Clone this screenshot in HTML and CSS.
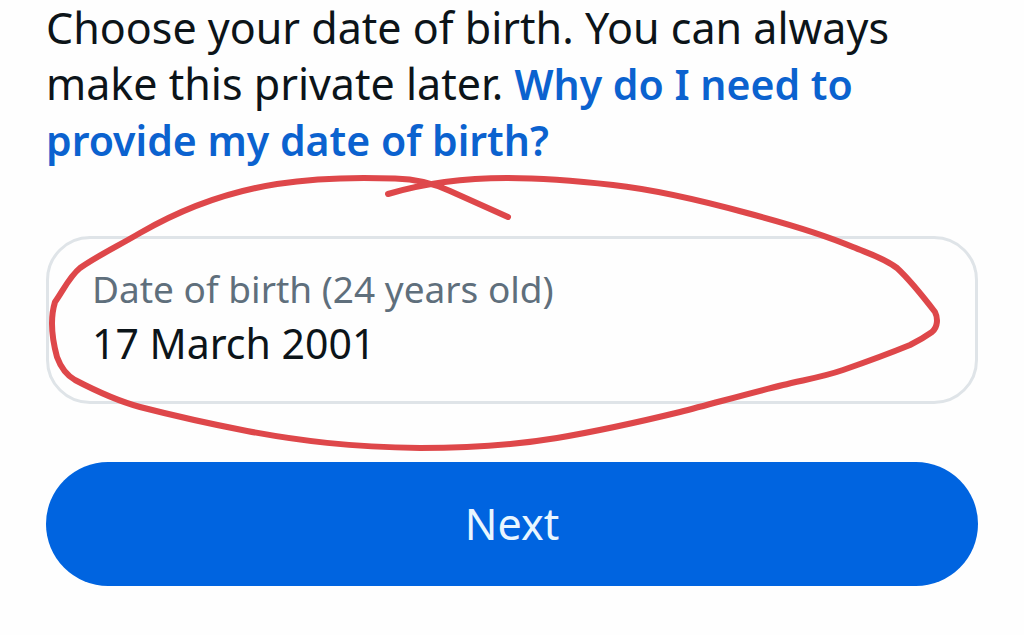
FILE: index.html
```html
<!DOCTYPE html>
<html lang="en">
<head>
  <meta charset="utf-8">
  <meta name="viewport" content="width=device-width, initial-scale=1">
  <title>Date of birth</title>
  <link rel="stylesheet" href="styles.css">
</head>
<body>
  <main class="page">
    <p class="intro">Choose your date of birth. You can always make this private later. <a class="intro-link" href="#why">Why do I need to provide my date of birth?</a></p>
    <form class="form">
      <div class="field-wrap">
        <div class="field">
          <label class="field-label" for="dob">Date of birth (24 years old)</label>
          <input class="field-input" id="dob" type="text" value="17 March 2001">
        </div>
        <svg class="scribble" viewBox="46 236 932 168" preserveAspectRatio="none" aria-hidden="true">
          <path d="M508 217 L450 191 C435 184 415 179 395 178.500 C355 177 315 178 277 184 C232 191 185 207 140 233 C118 246 97 256 80 268 C70 276 64 289 55 302 C51 315 51 335 57 357 C61 368 68 376 75 380 C96 391 118 401 140 407 C175 416 211 424 247 431 C300 441 350 447 420 448 C470 448 515 445 557 438 C598 431 639 422 680 412 C715 403 750 393 783 385 C803 380 823 377 843 370 C866 362 888 354 910 345 C918 341 925 337 932 332 C938 327 938 318 935 312 C925 299 910 280 897 268 C884 258 870 254 853 247 C820 233 785 223 747 213 C703 201 658 190 613 185 C578 181 542 178 507 178 C465 178 425 183 388 194"/>
        </svg>
      </div>
      <button class="next" type="button">Next</button>
    </form>
  </main>
</body>
</html>
```
FILE: styles.css
```css
* {
  box-sizing: border-box;
}

body {
  margin: 0;
  background: #fefefe;
  color: #0c1419;
  font-family: "Noto Sans", sans-serif;
  font-size: 43px;
  line-height: 56px;
}

.page {
  padding: 0 46px 48px;
}

.intro {
  margin: 0 0 68px;
}

.intro-link {
  color: #0b62cf;
  font-size: 41px;
  font-weight: 600;
  text-decoration: none;
}

.form {
  display: flex;
  flex-direction: column;
  gap: 58px;
}

.field-wrap {
  position: relative;
}

.field {
  display: flex;
  flex-direction: column;
  padding: 24px 43px 30px;
  border: 3px solid #dfe4e8;
  border-radius: 44px;
}

.field-label {
  color: #5f6f7c;
  font-size: 37px;
  line-height: 52px;
}

.field-input {
  width: 100%;
  height: 56px;
  padding: 0;
  border: 0;
  outline: 0;
  background: transparent;
  color: #0c1419;
  font: inherit;
  font-size: 41px;
}

.scribble {
  position: absolute;
  inset: 0;
  width: 100%;
  height: 100%;
  overflow: visible;
  pointer-events: none;
}

.scribble path {
  fill: none;
  stroke: #de474a;
  stroke-width: 6;
  stroke-linecap: round;
  stroke-linejoin: round;
}

.next {
  padding: 34px;
  border: 0;
  border-radius: 62px;
  background: #0064e0;
  color: #e9f6ff;
  font: inherit;
  line-height: 56px;
}
```
